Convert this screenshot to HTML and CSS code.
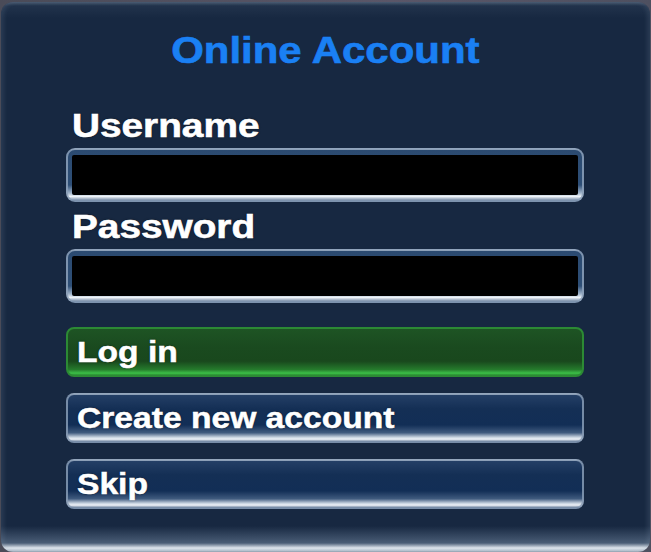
FILE: index.html
```html
<!DOCTYPE html>
<html lang="en">
<head>
<meta charset="utf-8">
<title>Online Account</title>
<link rel="stylesheet" href="styles.css">
</head>
<body>
<div class="panel">
  <h1 class="title"><span class="wide">Online Account</span></h1>
  <div class="form">
    <label class="label"><span class="wide">Username</span></label>
    <div class="field"><div class="field-inner"></div></div>
    <label class="label label-pass"><span class="wide">Password</span></label>
    <div class="field"><div class="field-inner"></div></div>
    <div class="buttons">
      <div class="btn btn-green"><span class="wide">Log in</span></div>
      <div class="btn btn-blue"><span class="wide">Create new account</span></div>
      <div class="btn btn-blue"><span class="wide">Skip</span></div>
    </div>
  </div>
</div>
</body>
</html>
```

FILE: styles.css
```css
html, body {
  margin: 0;
  padding: 0;
}
body {
  width: 651px;
  height: 552px;
  overflow: hidden;
  background: linear-gradient(to right, #4a4b58, #5a5668 60%, #4e5060);
  font-family: "Liberation Sans", Arial, sans-serif;
  font-weight: bold;
}
.wide {
  display: inline-block;
  transform-origin: left center;
}
.panel {
  box-sizing: border-box;
  margin: 2px 1px 0 1px;
  height: 550px;
  border-radius: 12px;
  padding: 30px 66px 0 65px;
  background:
    linear-gradient(to bottom, rgba(160,175,195,0.3) 0px, rgba(120,140,165,0.1) 4px, rgba(0,0,0,0) 16px),
    linear-gradient(to bottom, rgba(0,0,0,0) calc(100% - 26px), rgba(95,115,140,0.7) calc(100% - 9px), #dfe6ee calc(100% - 4px), #b4bfcc calc(100% - 1px), #8c96a4 100%),
    #172841;
  box-shadow: inset 3px 0 4px rgba(150,165,185,0.15), inset -3px 0 4px rgba(150,165,185,0.15);
}
.title {
  margin: 0;
  font-size: 36px;
  line-height: 36px;
  height: 36px;
  text-align: center;
  color: #1a80f4;
  padding-top: 1px;
}
.title .wide {
  transform-origin: center center;
  transform: scaleX(1.165);
  -webkit-text-stroke: 0.6px #1a80f4;
}
.form {
  display: flex;
  flex-direction: column;
  margin-top: 39px;
}
.label {
  display: block;
  font-size: 34px;
  line-height: 34px;
  color: #ffffff;
  padding-left: 6px;
  text-shadow: 0 0 2px rgba(0,0,0,0.7);
}
.label .wide {
  transform: scaleX(1.14);
  -webkit-text-stroke: 0.6px #fff;
}
.label-pass {
  margin-top: 7px;
}
.field {
  box-sizing: border-box;
  margin-top: 6px;
  height: 54px;
  border: 2px solid rgba(140,160,185,0.85);
  border-radius: 9px;
  padding: 5px 4px 5px 4px;
  background: linear-gradient(to bottom, #2b4a70 0%, #2e4f77 70%, #9fb3c9 86%, #eef3f8 93%, #7d91ab 100%);
}
.field-inner {
  height: 40px;
  background: #000;
  border-radius: 2px;
}
.buttons {
  display: flex;
  flex-direction: column;
  gap: 16px;
  margin-top: 24px;
}
.btn {
  box-sizing: border-box;
  height: 50px;
  border-radius: 8px;
  padding-left: 9px;
  font-size: 30px;
  line-height: 46px;
  color: #fff;
  text-shadow: 0 0 2px rgba(0,0,0,0.7);
}
.btn .wide {
  transform: scaleX(1.12);
  -webkit-text-stroke: 0.5px #fff;
}
.btn-green {
  border: 2px solid #2c8a34;
  background: linear-gradient(to bottom, #1e5424 0%, #1a4a1f 40%, #19481d 70%, #257a2c 88%, #3cc048 96%, #2a8e32 100%);
}
.btn-blue {
  border: 2px solid rgba(135,155,180,0.85);
  background: linear-gradient(to bottom, #243f66 0%, #142f55 30%, #122e56 65%, #3f5a7e 82%, #c9d4e0 92%, #eef2f7 96%, #8a9bb2 100%);
}
```
